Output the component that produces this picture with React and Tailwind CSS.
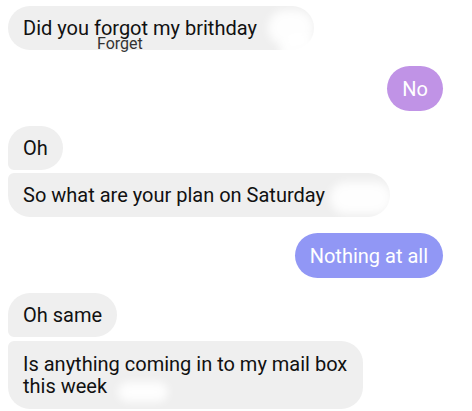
import React from 'react';

const font = { fontFamily: 'Roboto, "Noto Sans", sans-serif' };

const Smudge = ({ className }) => (
  <div className={`absolute rounded-full bg-white/90 blur-[4px] ${className}`} />
);

const Theirs = ({ children, shape, className = '' }) => (
  <div className={`relative flex items-center bg-[#efefef] px-[15px] text-[20px] text-[#111] ${shape} ${className}`}>
    {children}
  </div>
);

const Mine = ({ children, color, className = '' }) => (
  <div className={`flex h-[45px] items-center self-end rounded-full px-[15px] text-[20px] text-white ${color} ${className}`}>
    {children}
  </div>
);

export default function App() {
  return (
    <div className="relative h-[411px] w-[472px] overflow-hidden bg-white" style={font}>
      <div className="flex flex-col pl-[8px] pr-[29px] pt-[6px]">
        <Theirs shape="rounded-[22px]" className="h-[44px] w-[306px]">
          <span>Did you forgot my brithday</span>
          <span className="absolute left-[89px] top-[30px] text-[16px] leading-none text-[#333]">Forget</span>
        </Theirs>

        <Mine color="bg-[#c093e6]" className="mt-[16px]">No</Mine>

        <Theirs shape="rounded-[22px] rounded-bl-[6px]" className="mt-[15px] h-[44px] self-start">
          Oh
        </Theirs>
        <Theirs shape="rounded-[22px] rounded-tl-[6px]" className="mt-[3px] h-[44px] w-[382px]">
          So what are your plan on Saturday
        </Theirs>

        <Mine color="bg-[#9197f5]" className="mt-[16px]">Nothing at all</Mine>

        <Theirs shape="rounded-[22px] rounded-bl-[6px]" className="mt-[15px] h-[44px] self-start">
          Oh same
        </Theirs>
        <Theirs shape="rounded-[22px] rounded-tl-[6px]" className="mt-[4px] h-[68px] w-[355px] leading-[22px]">
          <span>
            Is anything coming in to my mail box
            <br />
            this week
          </span>
        </Theirs>
      </div>

      <Smudge className="left-[268px] top-[10px] h-[36px] w-[46px]" />
      <Smudge className="left-[280px] top-[32px] h-[36px] w-[36px]" />
      <Smudge className="left-[330px] top-[182px] h-[32px] w-[62px]" />
      <Smudge className="left-[118px] top-[382px] h-[20px] w-[50px]" />
    </div>
  );
}
